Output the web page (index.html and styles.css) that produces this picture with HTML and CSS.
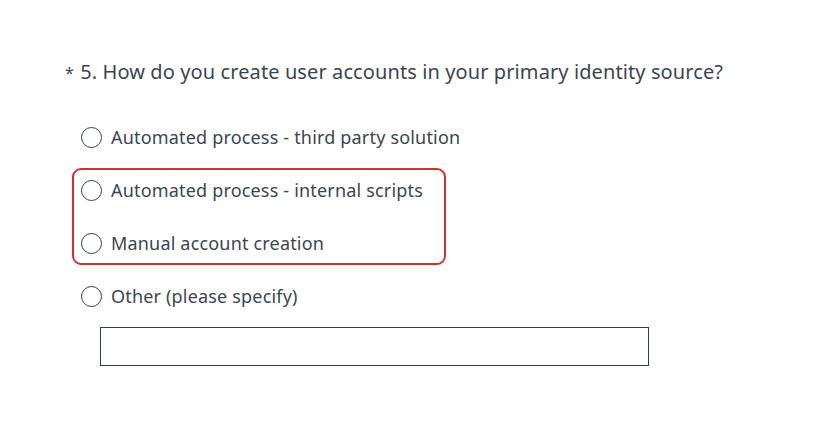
FILE: index.html
```html
<!DOCTYPE html>
<html>
<head>
<meta charset="utf-8">
<link rel="stylesheet" href="styles.css">
</head>
<body>
<div class="question">
  <h2 class="title"><span class="req">*</span> 5. How do you create user accounts in your primary identity source?</h2>
  <div class="options">
    <label class="option"><span class="radio"></span><span class="label">Automated process - third party solution</span></label>
    <div class="highlight">
      <label class="option"><span class="radio"></span><span class="label">Automated process - internal scripts</span></label>
      <label class="option"><span class="radio"></span><span class="label">Manual account creation</span></label>
    </div>
    <label class="option"><span class="radio"></span><span class="label">Other (please specify)</span></label>
    <div class="other-input"></div>
  </div>
</div>
</body>
</html>
```
FILE: styles.css
```css
html, body {
  margin: 0;
  padding: 0;
  background: #ffffff;
}
body {
  font-family: "Noto Sans", "Liberation Sans", sans-serif;
  font-weight: 400;
  color: #3b4550;
}
.question {
  padding: 56px 0 0 65px;
}
.title {
  margin: 0;
  height: 32px;
  font-size: 20px;
  font-weight: 400;
  line-height: 32px;
  color: #3b4550;
  letter-spacing: 0.1px;
}
.req {
  font-size: 16px;
  line-height: 1;
  margin-right: 1px;
}
.options {
  display: flex;
  flex-direction: column;
  gap: 21px;
  margin-top: 33px;
  padding-left: 15px;
}
.option {
  display: flex;
  align-items: center;
  height: 32px;
  gap: 9px;
  font-size: 18px;
  letter-spacing: 0.18px;
}
.radio {
  width: 19px;
  height: 19px;
  border: 1.5px solid #333e48;
  border-radius: 50%;
  flex: none;
  margin-left: 1px;
}
.highlight {
  display: flex;
  flex-direction: column;
  gap: 21px;
  margin: -6px 0 -6px -8px;
  padding: 4px 6px;
  width: 358px;
  border: 2px solid #d32f2f;
  border-radius: 9px;
}
.other-input {
  margin: -6px 0 0 20px;
  width: 547px;
  height: 37px;
  border: 1.5px solid #333e48;
}
```
